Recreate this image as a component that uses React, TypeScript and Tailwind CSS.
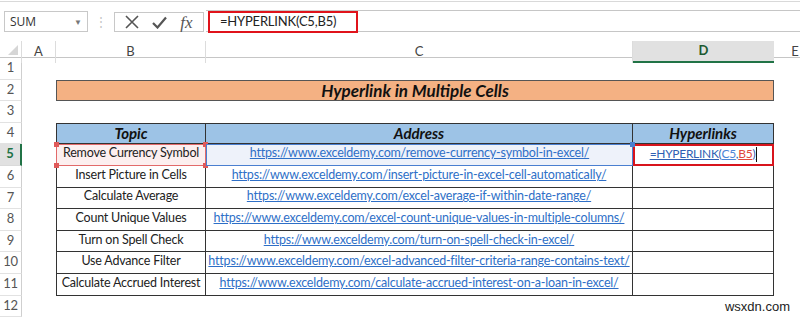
import React from 'react';

const rows = [
  { topic: 'Remove Currency Symbol', url: 'https://www.exceldemy.com/remove-currency-symbol-in-excel/' },
  { topic: 'Insert Picture in Cells', url: 'https://www.exceldemy.com/insert-picture-in-excel-cell-automatically/' },
  { topic: 'Calculate Average', url: 'https://www.exceldemy.com/excel-average-if-within-date-range/' },
  { topic: 'Count Unique Values', url: 'https://www.exceldemy.com/excel-count-unique-values-in-multiple-columns/' },
  { topic: 'Turn on Spell Check', url: 'https://www.exceldemy.com/turn-on-spell-check-in-excel/' },
  { topic: 'Use Advance Filter', url: 'https://www.exceldemy.com/excel-advanced-filter-criteria-range-contains-text/' },
  { topic: 'Calculate Accrued Interest', url: 'https://www.exceldemy.com/calculate-accrued-interest-on-a-loan-in-excel/' },
];

function RowHead({ n, active }: { n: number; active?: boolean }) {
  return (
    <div
      className={
        active
          ? 'h-[21.6px] flex items-end pb-[1px] justify-center border-b border-[#dadada] border-r-2 border-r-[#217346] bg-[#e1e1e1] text-[#217346] font-bold text-[13px]'
          : 'h-[21.6px] flex items-end pb-[1px] justify-center border-b border-[#e2e2e2] border-r border-r-[#cfcfcf] text-[#555] text-[13px]'
      }
    >
      {n}
    </div>
  );
}

function Handle({ pos }: { pos: string }) {
  return <span className={`absolute w-[5px] h-[5px] bg-[#e05a5a] ${pos}`} />;
}

export default function App() {
  return (
    <div
      className="relative w-[800px] h-[319px] overflow-hidden bg-white"
      style={{ fontFamily: 'Lato, "Open Sans", sans-serif' }}
    >
      {/* top strip + formula bar */}
      <div className="h-[40px] border-t border-t-[#d9d9d9] mt-[1px] relative">
        <div className="flex items-start pt-[8px]">
          <div className="ml-[4px] mt-[1px] w-[84px] h-[21px] border border-[#c8c8c8] flex items-center justify-between px-[5px] text-[12px] text-[#333]">
            <span style={{ fontFamily: '"Open Sans", sans-serif' }}>SUM</span>
            <span className="text-[8px] text-[#777]">▼</span>
          </div>
          <div className="w-[26px] h-[21px] flex items-center justify-center text-[#c4c4c4] text-[12px] mt-[1px]">⋮</div>
          <div className="mt-[2px] w-[90px] h-[20px] border border-[#c8c8c8] flex items-center justify-around px-[4px]">
            <svg width="14" height="14" viewBox="0 0 14 14">
              <path d="M1 1 L13 13 M13 1 L1 13" stroke="#555" strokeWidth="1.6" fill="none" />
            </svg>
            <svg width="15" height="13" viewBox="0 0 15 13">
              <path d="M1 7 L5.5 11.5 L14 1.5" stroke="#555" strokeWidth="2.2" fill="none" />
            </svg>
            <span
              className="text-[17px] text-[#555] italic leading-none"
              style={{ fontFamily: '"Liberation Serif", serif' }}
            >
              fx
            </span>
          </div>
          <div className="ml-[2px] flex-1 h-[22px] border-y border-[#c6c6c6] relative">
            <div className="absolute left-[2px] top-0 w-[150px] h-[22px] border-2 border-[#e0131b] flex items-center pl-[10px] text-[13px] tracking-[-0.2px] text-[#222]">
              =HYPERLINK(C5,B5)
            </div>
          </div>
        </div>
      </div>

      {/* column header row */}
      <div className="grid grid-cols-[22px_34px_150px_427px_141px_42px] w-[816px] h-[17px] border-b border-[#c6c6c6] text-[13px] text-[#444]">
        <div className="relative border-r border-[#dcdcdc]">
          <svg className="absolute left-[8px] top-[4px]" width="10" height="10" viewBox="0 0 10 10">
            <path d="M10 0 L10 10 L0 10 Z" fill="#d6d6d6" />
          </svg>
        </div>
        <div className="flex items-center justify-center border-r border-[#dcdcdc]">A</div>
        <div className="flex items-center justify-center border-r border-[#dcdcdc]">B</div>
        <div className="flex items-center justify-center border-r border-[#dcdcdc]">C</div>
        <div className="flex items-center justify-center bg-[#e1e1e1] border-b-2 border-[#217346] font-bold text-[#1d5a32]">D</div>
        <div className="flex items-center justify-center">E</div>
      </div>

      {/* sheet body */}
      <div className="grid grid-cols-[22px_34px_150px_427px_141px_42px] w-[816px] text-[12.5px] tracking-[-0.2px] text-[#222]">
        {/* row 1 */}
        <RowHead n={1} />
        <div className="col-span-5" />

        {/* row 2 title */}
        <RowHead n={2} />
        <div />
        <div className="col-span-3 h-[21.6px] bg-[#f4b183] border border-[#555] flex items-center justify-center font-bold italic text-[17px] tracking-normal text-[#111]">
          Hyperlink in Multiple Cells
        </div>
        <div />

        {/* row 3 */}
        <RowHead n={3} />
        <div className="col-span-5" />

        {/* row 4 header */}
        <RowHead n={4} />
        <div />
        <div className="h-[21.6px] bg-[#9dc3e6] border border-[#333] flex items-center justify-center font-bold italic text-[15px] tracking-normal text-[#111]">Topic</div>
        <div className="h-[21.6px] bg-[#9dc3e6] border-y border-r border-[#333] flex items-center justify-center font-bold italic text-[15px] tracking-normal text-[#111]">Address</div>
        <div className="h-[21.6px] bg-[#9dc3e6] border-y border-r border-[#333] flex items-center justify-center font-bold italic text-[15px] tracking-normal text-[#111]">Hyperlinks</div>
        <div />

        {/* data rows */}
        {rows.map((r, i) => {
          const first = i === 0;
          return (
            <React.Fragment key={r.topic}>
              <RowHead n={5 + i} active={first} />
              <div />
              {first ? (
                <div className="relative h-[21.6px] bg-[#fcefef] border-[1.5px] border-[#e26a6a] flex items-end pb-[2px] justify-center whitespace-nowrap">
                  {r.topic}
                  <Handle pos="-left-[3px] -top-[3px]" />
                  <Handle pos="-right-[3px] -top-[3px]" />
                  <Handle pos="-left-[3px] -bottom-[3px]" />
                  <Handle pos="-right-[3px] -bottom-[3px]" />
                </div>
              ) : (
                <div className="h-[21.6px] border-l border-r border-b border-[#333] flex items-end pb-[2px] justify-center whitespace-nowrap">
                  {r.topic}
                </div>
              )}
              {first ? (
                <div className="relative h-[21.6px] bg-[#eef2fa] border border-[#4a7fd0] flex items-end pb-[2px] justify-center whitespace-nowrap">
                  <span className="text-[#2e6fc7] underline">{r.url}</span>
                  <span className="absolute -right-[3px] -top-[3px] w-[5px] h-[5px] bg-[#4a7fd0]" />
                </div>
              ) : (
                <div className="h-[21.6px] border-r border-b border-[#333] flex items-end pb-[2px] justify-center whitespace-nowrap">
                  <span className="text-[#2e6fc7] underline">{r.url}</span>
                </div>
              )}
              {first ? (
                <div className="h-[21.6px] border-2 border-[#d8141c] flex items-end pb-[1px] justify-center whitespace-nowrap text-[12px] tracking-[-0.3px]">
                  <span className="underline text-[#2f5fb3]">=HYPERLINK(</span>
                  <span className="underline text-[#4b86d6]">C5</span>
                  <span className="underline text-[#2f5fb3]">,</span>
                  <span className="underline text-[#e0483e]">B5</span>
                  <span className="underline text-[#2f5fb3]">)</span>
                  <span className="inline-block w-px h-[15px] bg-[#111] ml-[1px] mb-[1px]" />
                </div>
              ) : (
                <div className="h-[21.6px] border-r border-b border-[#333]" />
              )}
              <div />
            </React.Fragment>
          );
        })}

        {/* row 12 */}
        <RowHead n={12} />
        <div className="col-span-5" />
      </div>

      <div
        className="absolute right-[10px] bottom-[3px] text-[13px] text-[#222]"
        style={{ fontFamily: '"Liberation Sans", Arial, sans-serif' }}
      >
        wsxdn.com
      </div>
    </div>
  );
}
